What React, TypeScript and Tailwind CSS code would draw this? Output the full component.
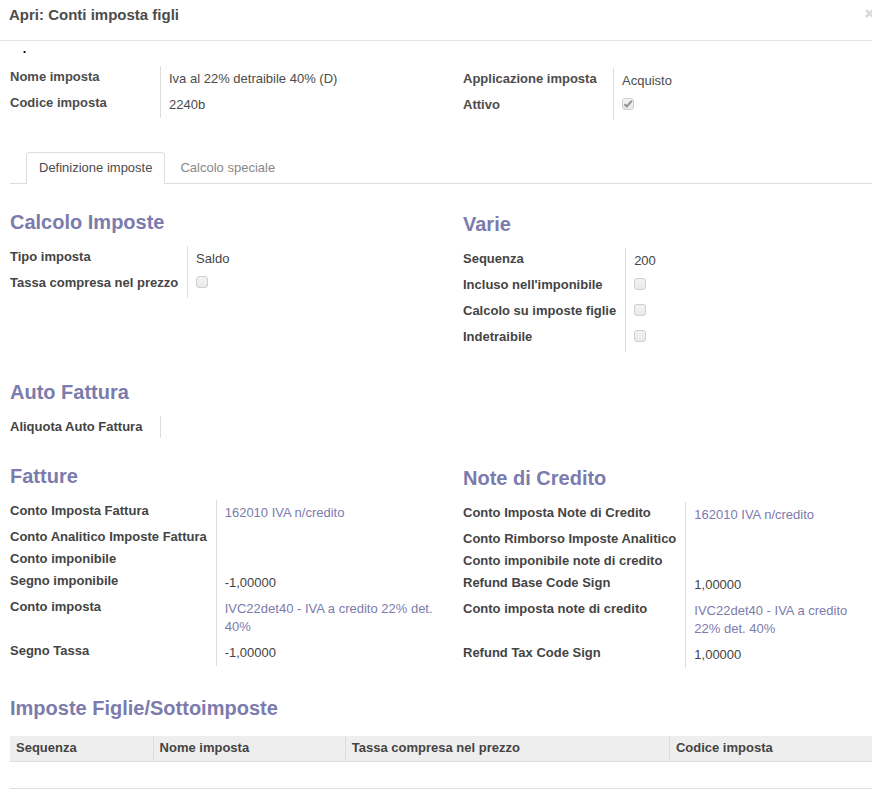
import { Fragment, useId, type ReactNode } from "react";

type Field = {
  label: string;
  value?: string;
  href?: string;
  checked?: boolean;
};

function ReadonlyCheckbox({ id, checked }: { id: string; checked: boolean }) {
  return (
    <span className="relative block h-[18px] w-3">
      <input
        id={id}
        type="checkbox"
        defaultChecked={checked}
        disabled
        className="block h-3 w-3 appearance-none rounded-[3px] border border-[#cfcfcf] bg-linear-to-b from-[#f3f3f3] to-[#e9e9e9]"
      />
      {checked && (
        <svg
          viewBox="0 0 12 12"
          className="pointer-events-none absolute top-0 left-0 h-3 w-3"
          aria-hidden="true"
        >
          <path d="M2.4 6.2 L4.8 8.4 L9.8 2.8" fill="none" stroke="#979797" strokeWidth="2.2" />
        </svg>
      )}
    </span>
  );
}

function FieldGroup({ fields }: { fields: Field[] }) {
  const base = useId();
  return (
    <div className="grid grid-cols-[minmax(150px,max-content)_1fr]">
      {fields.map((field, i) => {
        const id = `${base}-${i}`;
        const isCheckbox = field.checked !== undefined;
        let content: ReactNode = field.value;
        if (isCheckbox) {
          content = <ReadonlyCheckbox id={id} checked={field.checked === true} />;
        } else if (field.href) {
          content = (
            <a href={field.href} className="text-[#7c7bad] hover:underline">
              {field.value}
            </a>
          );
        }
        return (
          <Fragment key={field.label}>
            <div className="py-0.5 pr-[9px] font-bold whitespace-nowrap">
              {isCheckbox ? <label htmlFor={id}>{field.label}</label> : <span>{field.label}</span>}
            </div>
            <div className={content ? "border-l border-[#ddd] px-2 py-1" : "border-l border-[#ddd]"}>
              {content}
            </div>
          </Fragment>
        );
      })}
    </div>
  );
}

function Heading({ children }: { children: ReactNode }) {
  return <h2 className="mb-3 text-xl leading-6 font-bold text-[#7c7bad]">{children}</h2>;
}

function TwoColumns({ left, right }: { left: ReactNode; right: ReactNode }) {
  return (
    <div className="grid grid-cols-[453fr_409fr]">
      <div className="pr-2">{left}</div>
      <div className="py-0.5">{right}</div>
    </div>
  );
}

const columns = [
  { title: "Sequenza", width: "w-[16.6%]" },
  { title: "Nome imposta", width: "w-[22.3%]" },
  { title: "Tassa compresa nel prezzo", width: "w-[37.6%]" },
  { title: "Codice imposta", width: "" },
];

export default function App() {
  return (
    <div className="overflow-hidden bg-white font-['Liberation_Sans',Arial,sans-serif] text-[13px] leading-[18px] text-[#4c4c4c]">
      <header className="flex h-[41px] items-start justify-between border-b border-[#e2e2e2] pt-1.5 pl-[9px]">
        <h1 className="text-[15px] leading-[18px] font-bold">Apri: Conti imposta figli</h1>
        <button type="button" aria-label="Chiudi" className="-mr-0.5 pt-[3px] text-[#dadada]">
          <svg viewBox="0 0 9 9" className="h-[9px] w-[9px]" aria-hidden="true">
            <path d="M1 1 L8 8 M8 1 L1 8" fill="none" stroke="currentColor" strokeWidth="2.6" />
          </svg>
        </button>
      </header>

      <main className="pl-2.5">
        <p className="h-[25px] pl-3 text-lg leading-3 text-black">.</p>

        <TwoColumns
          left={
            <FieldGroup
              fields={[
                { label: "Nome imposta", value: "Iva al 22% detraibile 40% (D)" },
                { label: "Codice imposta", value: "2240b" },
              ]}
            />
          }
          right={
            <FieldGroup
              fields={[
                { label: "Applicazione imposta", value: "Acquisto" },
                { label: "Attivo", checked: true },
              ]}
            />
          }
        />

        <div role="tablist" className="mt-[30px] flex h-8 border-b border-[#ddd] pl-4">
          <button
            type="button"
            role="tab"
            aria-selected="true"
            className="-mb-px rounded-t border border-b-0 border-[#ddd] bg-white px-3 pb-0.5"
          >
            Definizione imposte
          </button>
          <button type="button" role="tab" aria-selected="false" className="px-[15px] text-[#888]">
            Calcolo speciale
          </button>
        </div>

        <div className="flex flex-col gap-[26px] pt-[26px] text-[#444]">
          <TwoColumns
            left={
              <>
                <Heading>Calcolo Imposte</Heading>
                <FieldGroup
                  fields={[
                    { label: "Tipo imposta", value: "Saldo" },
                    { label: "Tassa compresa nel prezzo", checked: false },
                  ]}
                />
              </>
            }
            right={
              <>
                <Heading>Varie</Heading>
                <FieldGroup
                  fields={[
                    { label: "Sequenza", value: "200" },
                    { label: "Incluso nell'imponibile", checked: false },
                    { label: "Calcolo su imposte figlie", checked: false },
                    { label: "Indetraibile", checked: false },
                  ]}
                />
              </>
            }
          />

          <section>
            <Heading>Auto Fattura</Heading>
            <FieldGroup fields={[{ label: "Aliquota Auto Fattura" }]} />
          </section>

          <TwoColumns
            left={
              <>
                <Heading>Fatture</Heading>
                <FieldGroup
                  fields={[
                    { label: "Conto Imposta Fattura", value: "162010 IVA n/credito", href: "#conto-fattura" },
                    { label: "Conto Analitico Imposte Fattura" },
                    { label: "Conto imponibile" },
                    { label: "Segno imponibile", value: "-1,00000" },
                    { label: "Conto imposta", value: "IVC22det40 - IVA a credito 22% det. 40%", href: "#conto-imposta" },
                    { label: "Segno Tassa", value: "-1,00000" },
                  ]}
                />
              </>
            }
            right={
              <>
                <Heading>Note di Credito</Heading>
                <FieldGroup
                  fields={[
                    { label: "Conto Imposta Note di Credito", value: "162010 IVA n/credito", href: "#conto-note" },
                    { label: "Conto Rimborso Imposte Analitico" },
                    { label: "Conto imponibile note di credito" },
                    { label: "Refund Base Code Sign", value: "1,00000" },
                    { label: "Conto imposta note di credito", value: "IVC22det40 - IVA a credito 22% det. 40%", href: "#imposta-note" },
                    { label: "Refund Tax Code Sign", value: "1,00000" },
                  ]}
                />
              </>
            }
          />

          <section>
            <Heading>Imposte Figlie/Sottoimposte</Heading>
            <table className="mt-4 w-full table-fixed border-collapse text-left">
              <thead>
                <tr className="h-[25px] border-b border-[#ddd] bg-[#eee]">
                  {columns.map((column) => (
                    <th
                      key={column.title}
                      scope="col"
                      className={`border-r border-[#ddd] px-1.5 font-bold last:border-r-0 ${column.width}`}
                    >
                      {column.title}
                    </th>
                  ))}
                </tr>
              </thead>
              <tbody>
                <tr className="h-[27px] border-b border-[#ddd]">
                  <td colSpan={4} />
                </tr>
              </tbody>
            </table>
          </section>
        </div>
      </main>
    </div>
  );
}
